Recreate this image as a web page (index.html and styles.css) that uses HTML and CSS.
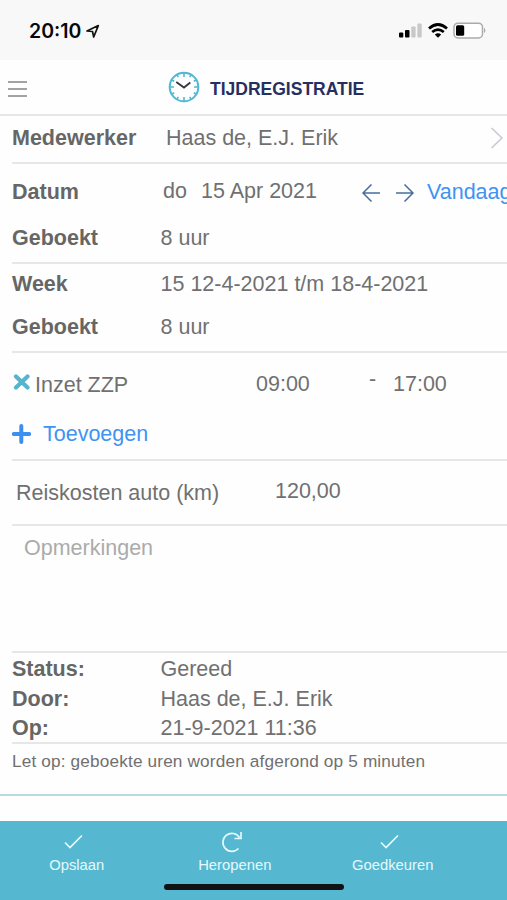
FILE: index.html
```html
<!DOCTYPE html>
<html lang="nl">
<head>
<meta charset="utf-8">
<title>Tijdregistratie</title>
<link rel="stylesheet" href="styles.css">
</head>
<body>
<div class="status-bar">
  <span class="time">20:10</span>
  <svg class="location" width="14" height="15" viewBox="0 0 14 15"><path d="M1 7 12.3 1.6 7.700 13 6.500 7.500Z" fill="none" stroke="#111" stroke-width="1.700" stroke-linejoin="round"/></svg>
  <svg class="signal" width="24" height="16" viewBox="0 0 24 16"><rect x="0" y="9.5" width="4.3" height="5" rx="1"/><rect x="6" y="7" width="4.5" height="7.500" rx="1"/><rect x="12.300" y="3.500" width="4.300" height="11" rx="1" fill="#c8c8c8"/><rect x="18.400" y="0.500" width="4.300" height="14" rx="1" fill="#c8c8c8"/></svg>
  <svg class="wifi" width="20" height="16" viewBox="0 0 20 16"><g fill="none" stroke="#000" stroke-width="2.700"><path d="M1 5.400Q10-2.400 19 5.400"/><path d="M4.200 9Q10 4.200 15.800 9"/></g><path d="M6.800 11.600Q10 9 13.200 11.600L10 14.800Z"/></svg>
  <svg class="battery" width="34" height="18" viewBox="0 0 34 18"><rect x="1" y="1.200" width="28.500" height="14.800" rx="4" fill="#fff" stroke="#aaa" stroke-width="1.500"/><rect x="3" y="3.200" width="8.200" height="10.600" rx="1.500"/><path d="M31.200 5.800Q33.500 8.500 31.200 11.200Z" fill="#999"/></svg>
</div>
<header class="header">
  <svg class="menu" width="20" height="18" viewBox="0 0 20 18"><path d="M0 2H19M0 9H19M0 16H19" stroke="#858585" stroke-width="1.700"/></svg>
  <svg class="clock" width="32" height="32" viewBox="0 0 32 32"><circle cx="16" cy="16" r="14.300" fill="none" stroke="#50b8d2" stroke-width="2"/><path d="M16 2V6M16 26V30M2 16H6M26 16H30M9 3.900 10.300 6.200M23 3.900 21.700 6.200M28.100 9 25.800 10.300M28.100 23 25.800 21.700M23 28.100 21.700 25.800M9 28.100 10.300 25.800M3.900 23 6.200 21.700M3.900 9 6.200 10.300" stroke="#50b8d2" stroke-width="1.600"/><path d="M8.300 11 16 16.500 22.300 11.500" fill="none" stroke="#383340" stroke-width="1.800"/></svg>
  <h1>TIJDREGISTRATIE</h1>
</header>
<main class="form">
  <section class="employee">
    <b class="label">Medewerker</b><span class="person">Haas de, E.J. Erik</span>
    <svg class="chevron" width="14" height="24" viewBox="0 0 14 24"><path d="M1.500 2 12 12 1.500 22" fill="none" stroke="#c7c9d3" stroke-width="1.500"/></svg>
  </section>
  <section class="day">
    <div class="row date-row">
      <b class="label">Datum</b><span class="weekday">do</span><span class="date">15 Apr 2021</span>
      <svg class="arrows" width="54" height="20" viewBox="0 0 54 20"><g fill="none" stroke="#4a6d9f" stroke-width="1.500"><path d="M19 10H2M10.500 1.500 2 10 10.500 18.500"/><path d="M35 10H52M43.500 1.500 52 10 43.500 18.500"/></g></svg>
      <a class="today">Vandaag</a>
    </div>
    <div class="row"><b class="label">Geboekt</b><span>8 uur</span></div>
  </section>
  <section class="week">
    <div class="row"><b class="label">Week</b><span>15 12-4-2021 t/m 18-4-2021</span></div>
    <div class="row"><b class="label">Geboekt</b><span>8 uur</span></div>
  </section>
  <section class="entries">
    <div class="row entry">
      <svg class="delete" width="20" height="16" viewBox="0 0 20 16"><path d="M4 2.500 15.500 13.500M15.500 2.500 4 13.500" stroke="#55b5ce" stroke-width="4.200" stroke-linecap="round"/></svg>
      <span class="task">Inzet ZZP</span><span class="from">09:00</span><span class="dash">-</span><span class="until">17:00</span>
    </div>
    <div class="row add">
      <svg width="19" height="20" viewBox="0 0 19 20"><path d="M9.300 2V18M1.800 10H17.200" stroke="#3b8ff0" stroke-width="4" stroke-linecap="round"/></svg>
      <span>Toevoegen</span>
    </div>
  </section>
  <section class="travel"><span class="travel-label">Reiskosten auto (km)</span><span class="amount">120,00</span></section>
  <section class="notes">Opmerkingen</section>
  <section class="state">
    <div class="row"><b class="label">Status:</b><span>Gereed</span></div>
    <div class="row"><b class="label">Door:</b><span>Haas de, E.J. Erik</span></div>
    <div class="row"><b class="label">Op:</b><span>21-9-2021 11:36</span></div>
  </section>
  <p class="hint">Let op: geboekte uren worden afgerond op 5 minuten</p>
</main>
<footer class="toolbar">
  <div class="action"><svg width="20" height="20" viewBox="0 0 20 20"><path d="M1 10.500 6 15.500 18 3.500" fill="none" stroke="#e9fbff" stroke-width="1.600"/></svg><span>Opslaan</span></div>
  <div class="action reopen"><svg width="22" height="22" viewBox="0 0 22 22"><path d="M17.500 17.500A9 9 0 1 1 18.500 6.500M20 1V7.500H13.500" fill="none" stroke="#e9fbff" stroke-width="1.600"/></svg><span>Heropenen</span></div>
  <div class="action"><svg width="20" height="20" viewBox="0 0 20 20"><path d="M1 10.500 6 15.500 18 3.500" fill="none" stroke="#e9fbff" stroke-width="1.600"/></svg><span>Goedkeuren</span></div>
  <div class="home-indicator"></div>
</footer>
</body>
</html>
```
FILE: styles.css
```css
* { box-sizing: border-box; }
body {
  margin: 0;
  width: 507px;
  height: 900px;
  overflow: hidden;
  background: #fefefe;
  color: #707070;
  font: 21.5px/24px "Liberation Sans", Arial, sans-serif;
  white-space: nowrap;
}
svg { display: block; flex: none; }
.status-bar {
  display: flex;
  align-items: center;
  height: 60px;
  padding: 2px 20px 0 29px;
  background: #f8f8f8;
}
.time {
  width: 53px;
  color: #080808;
  font: 600 19.5px/24px Inter, sans-serif;
}
.location { margin-left: 4px; }
.signal { margin-left: auto; }
.wifi { margin-left: 5px; }
.battery { margin-left: 5px; }
.header {
  display: flex;
  align-items: center;
  height: 56px;
  padding-left: 8px;
  border-bottom: 2px solid #e7e7e7;
}
.menu { margin-top: 3px; }
.clock { margin-left: 140px; }
h1 {
  margin: 3px 0 0 10px;
  color: #26305f;
  font-size: 17.5px;
  line-height: 24px;
}
.form {
  height: 680px;
  padding-left: 12px;
  border-bottom: 2px solid #b9d9e0;
}
section { border-bottom: 2px solid #e7e7e7; }
.row { display: flex; align-items: center; }
.label { flex: none; width: 148.5px; color: #666; }
.employee { display: flex; align-items: center; height: 48px; padding-bottom: 2px; }
.employee .label { width: 154px; }
.chevron { margin: 0 3px 0 auto; }
.day { height: 100px; padding-top: 5px; }
.day .row { height: 46px; }
.date-row .label { width: 151px; }
.weekday { flex: none; width: 38px; margin-top: -3px; }
.date { flex: none; width: 160px; margin-top: -3px; }
.arrows { margin: 2px 12px 0 0; }
.today, .add { color: #3f93f2; }
.week { height: 89px; }
.week .row:first-child { height: 40px; }
.week .row:last-child { height: 46px; }
.entries { height: 108px; padding-top: 7px; }
.entries .row { height: 50px; }
.entries .add { height: 48px; }
.delete { margin-top: -6px; }
.task { width: 221px; margin-left: 3px; }
.from { width: 113px; margin-top: -3px; }
.dash { width: 24px; margin-top: -13px; }
.until { margin-top: -3px; }
.add span { margin-left: 12px; }
.travel { display: flex; align-items: center; height: 65px; padding-left: 4px; }
.travel-label { width: 259px; }
.amount { margin-top: -3px; }
.notes { height: 127px; padding: 10px 12px; color: #ababab; }
.state { height: 91px; padding-top: 1.5px; }
.state .row { height: 29.5px; }
.hint { margin: 5px 0 0; font-size: 17.2px; letter-spacing: 0.16px; }
.toolbar {
  position: relative;
  display: grid;
  grid-template-columns: 158px 158px 158px;
  height: 79px;
  margin-top: 25px;
  padding-top: 10px;
  background: #55b8d0;
  color: #e5f9fd;
  font-size: 14.8px;
}
.action { display: flex; flex-direction: column; align-items: center; margin-left: -4.5px; }
.action svg { height: 22px; margin-right: 5px; }
.home-indicator {
  position: absolute;
  left: 164px;
  bottom: 10px;
  width: 180px;
  height: 6px;
  border-radius: 3px;
  background: #101214;
}
```
